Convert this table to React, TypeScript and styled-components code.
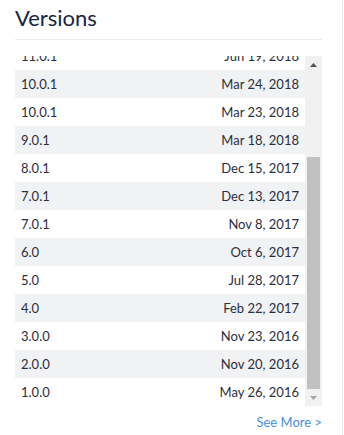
import React from "react";
import styled, { createGlobalStyle } from "styled-components";

const Global = createGlobalStyle`
  html, body { margin: 0; padding: 0; background: #fff; }
  body { font-family: Lato, "Open Sans", sans-serif; }
`;

const Panel = styled.div`
  width: 343px;
  height: 435px;
  box-sizing: border-box;
  border-right: 1px solid #eeeeee;
  padding: 0 20px 0 15px;
  display: flex;
  flex-direction: column;
`;

const Title = styled.h2`
  margin: 0;
  height: 40px;
  box-sizing: border-box;
  border-bottom: 1px solid #e9ebee;
  font-family: Lato, sans-serif;
  font-weight: 400;
  font-size: 22px;
  line-height: 1;
  color: #18263f;
  padding-top: 7px;
`;

const ListArea = styled.div`
  margin-top: 16px;
  height: 350px;
  display: flex;
`;

const Rows = styled.div`
  flex: 1;
  overflow: hidden;
  display: flex;
  flex-direction: column;
  justify-content: flex-end;
`;

const Row = styled.div<{ $shade: boolean }>`
  flex: 0 0 28px;
  height: 28px;
  display: flex;
  align-items: center;
  justify-content: space-between;
  padding: 0 6px 0 6px;
  background: ${(p) => (p.$shade ? "#f1f2f4" : "#ffffff")};
  font-size: 13px;
  color: #2b2e3b;
`;

const Scrollbar = styled.div`
  width: 17px;
  background: #f1f1f1;
  display: flex;
  flex-direction: column;
`;

const ArrowButton = styled.div`
  height: 17px;
  display: flex;
  align-items: center;
  justify-content: center;
`;

const Track = styled.div`
  flex: 1;
  display: flex;
  flex-direction: column;
  justify-content: flex-end;
  padding: 0 2px;
`;

const Thumb = styled.div`
  height: 232px;
  background: #c1c1c1;
`;

const Footer = styled.div`
  display: flex;
  justify-content: flex-end;
  padding-top: 8px;
`;

const SeeMore = styled.a`
  font-size: 13px;
  color: #4a8fd8;
  text-decoration: none;
  cursor: pointer;
`;

const versions: [string, string][] = [
  ["12.0.0", "Jul 2, 2018"],
  ["11.0.1", "Jun 19, 2018"],
  ["10.0.1", "Mar 24, 2018"],
  ["10.0.1", "Mar 23, 2018"],
  ["9.0.1", "Mar 18, 2018"],
  ["8.0.1", "Dec 15, 2017"],
  ["7.0.1", "Dec 13, 2017"],
  ["7.0.1", "Nov 8, 2017"],
  ["6.0", "Oct 6, 2017"],
  ["5.0", "Jul 28, 2017"],
  ["4.0", "Feb 22, 2017"],
  ["3.0.0", "Nov 23, 2016"],
  ["2.0.0", "Nov 20, 2016"],
  ["1.0.0", "May 26, 2016"],
];

const Tri = ({ up, color }: { up: boolean; color: string }) => (
  <svg width="7" height="4" viewBox="0 0 7 4">
    <polygon points={up ? "0,4 7,4 3.5,0" : "0,0 7,0 3.5,4"} fill={color} />
  </svg>
);

export default function App() {
  const n = versions.length;
  return (
    <>
      <Global />
      <Panel>
        <Title>Versions</Title>
        <ListArea>
          <Rows>
            {versions.map(([v, d], i) => (
              <Row key={i} $shade={(n - 1 - i) % 2 === 1}>
                <span>{v}</span>
                <span>{d}</span>
              </Row>
            ))}
          </Rows>
          <Scrollbar>
            <ArrowButton>
              <Tri up color="#505050" />
            </ArrowButton>
            <Track>
              <Thumb />
            </Track>
            <ArrowButton>
              <Tri up={false} color="#a3a3a3" />
            </ArrowButton>
          </Scrollbar>
        </ListArea>
        <Footer>
          <SeeMore>See More &gt;</SeeMore>
        </Footer>
      </Panel>
    </>
  );
}
